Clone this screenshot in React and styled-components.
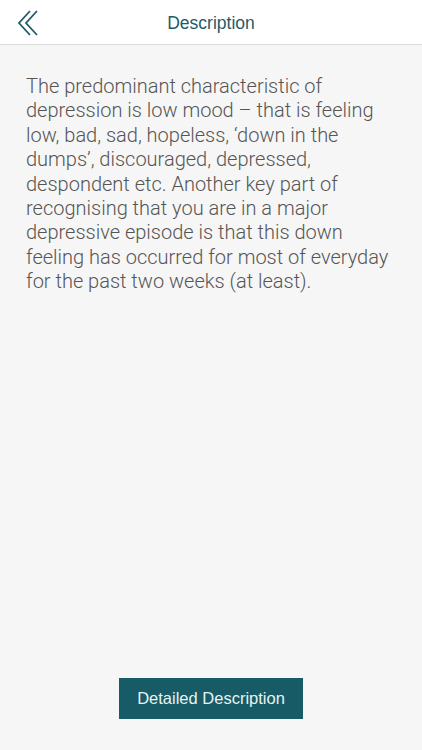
import styled, { createGlobalStyle } from "styled-components";

const Global = createGlobalStyle`
  html, body {
    margin: 0;
    padding: 0;
    background: #f6f6f6;
  }
  body {
    font-family: "Liberation Sans", Arial, sans-serif;
  }
`;

const Page = styled.div`
  height: 750px;
  display: flex;
  flex-direction: column;
  background: #f6f6f6;
`;

const Header = styled.header`
  height: 44px;
  display: grid;
  grid-template-columns: 60px 1fr 60px;
  align-items: center;
  background: #ffffff;
  border-bottom: 1px solid #dcdcdc;
`;

const BackButton = styled.button`
  border: 0;
  background: none;
  padding: 2px 0 0 17px;
  display: flex;
  align-items: center;
  height: 44px;
  cursor: pointer;
`;

const Title = styled.h1`
  margin: 0;
  padding-top: 2px;
  text-align: center;
  font-size: 17.5px;
  font-weight: 400;
  color: #1f5b66;
`;

const Body = styled.main`
  flex: 1;
  padding: 29px 26px 0 26px;
`;

const Text = styled.p`
  margin: 0;
  font-family: Roboto, "Liberation Sans", sans-serif;
  font-size: 20px;
  line-height: 24.4px;
  color: #555555;
  font-weight: 300;
`;

const Footer = styled.div`
  display: flex;
  justify-content: center;
  padding-bottom: 31px;
`;

const Action = styled.button`
  width: 184px;
  height: 41px;
  border: 0;
  background: #175b66;
  color: #e6f3f5;
  font-family: "Liberation Sans", Arial, sans-serif;
  font-size: 16.5px;
  cursor: pointer;
`;

function BackIcon() {
  return (
    <svg width="24" height="28" viewBox="0 0 24 28" fill="none">
      <path d="M13 2 L2 14 L13 26" stroke="#1f5b66" strokeWidth="1.8" />
      <path d="M20 2 L9 14 L20 26" stroke="#1f5b66" strokeWidth="1.8" />
    </svg>
  );
}

export default function App() {
  return (
    <Page>
      <Global />
      <Header>
        <BackButton aria-label="Back">
          <BackIcon />
        </BackButton>
        <Title>Description</Title>
        <span />
      </Header>
      <Body>
        <Text>
          The predominant characteristic of depression is low mood – that is
          feeling low, bad, sad, hopeless, ‘down in the dumps’, discouraged,
          depressed, despondent etc. Another key part of recognising that you
          are in a major depressive episode is that this down feeling has
          occurred for most of everyday for the past two weeks (at least).
        </Text>
      </Body>
      <Footer>
        <Action>Detailed Description</Action>
      </Footer>
    </Page>
  );
}
